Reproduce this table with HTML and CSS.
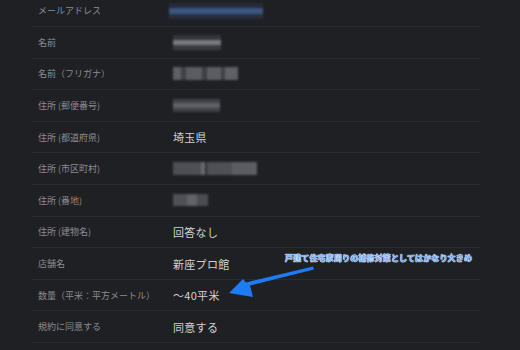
FILE: index.html
```html
<!DOCTYPE html>
<html lang="ja">
<head>
<meta charset="utf-8">
<link rel="stylesheet" href="styles.css">
</head>
<body>
<div class="page">
  <div class="table">
    <div class="row"><div class="label">メールアドレス</div><div class="value"><span class="mosaic m-email"></span></div></div>
    <div class="row"><div class="label">名前</div><div class="value"><span class="mosaic m-name"></span></div></div>
    <div class="row"><div class="label">名前（フリガナ）</div><div class="value"><span class="mosaic m-kana"></span></div></div>
    <div class="row"><div class="label">住所 (郵便番号)</div><div class="value"><span class="mosaic m-zip"></span></div></div>
    <div class="row"><div class="label">住所 (都道府県)</div><div class="value">埼玉県</div></div>
    <div class="row"><div class="label">住所 (市区町村)</div><div class="value"><span class="mosaic m-city"></span></div></div>
    <div class="row"><div class="label">住所 (番地)</div><div class="value"><span class="mosaic m-addr"></span></div></div>
    <div class="row"><div class="label">住所 (建物名)</div><div class="value">回答なし</div></div>
    <div class="row"><div class="label">店舗名</div><div class="value">新座プロ館</div></div>
    <div class="row"><div class="label">数量（平米：平方メートル）</div><div class="value">〜40平米</div></div>
    <div class="row"><div class="label">規約に同意する</div><div class="value">同意する</div></div>
  </div>
  <div class="note">戸建て住宅家周りの補修対策としてはかなり大きめ</div>
  <svg class="arrow" width="520" height="350" viewBox="0 0 520 350">
    <path d="M313 270.5 L314 273.5 L250 289.5 L253 301 L229 297 L243 283 L246 286.5 Z" fill="#1d7cf2"/>
  </svg>
</div>
</body>
</html>
```

FILE: styles.css
```css
html, body {
  margin: 0;
  padding: 0;
  background: #1f2024;
}
body {
  width: 520px;
  height: 350px;
  overflow: hidden;
  font-family: "Noto Sans CJK JP", "Noto Sans", sans-serif;
}
.page {
  position: relative;
  width: 520px;
  height: 350px;
}
.table {
  margin: -4.5px 0 0 32px;
  width: 449px;
  display: flex;
  flex-direction: column;
}
.row {
  height: 31.6px;
  box-sizing: border-box;
  border-bottom: 1px solid #2a2b30;
  display: grid;
  grid-template-columns: 141px 1fr;
  align-items: center;
}
.label {
  padding-left: 6px;
  font-size: 9px;
  color: #8b8c90;
  white-space: nowrap;
}
.value {
  font-size: 11px;
  letter-spacing: 0.3px;
  color: #d2d2d4;
  display: flex;
  align-items: center;
}
.mosaic {
  display: block;
  filter: blur(0.8px);
}
.m-email {
  width: 94px;
  height: 16px;
  margin-left: -4px;
  background:
    linear-gradient(180deg, #272b36 0 30%, #3a5682 30% 70%, #2a2f3b 70%);
}
.m-name {
  width: 48px;
  height: 15px;
  background:
    linear-gradient(180deg, #33353a 0 33%, #777a80 33% 66%, #3a3c42 66%);
}
.m-kana {
  width: 65px;
  height: 13px;
  background:
    linear-gradient(90deg, #5d5f64 0 12%, #3f4146 12% 20%, #5a5c61 20% 45%, #3e4045 45% 52%, #5b5d62 52% 74%, #404247 74% 80%, #5e6065 80%);
}
.m-zip {
  width: 47px;
  height: 13px;
  background:
    linear-gradient(180deg, #404247 0 30%, #5f6166 30% 70%, #3e4045 70%);
}
.m-city {
  width: 84px;
  height: 13px;
  background:
    linear-gradient(90deg, #4d4f54 0 33%, #67696e 33% 38%, #2c2e33 38% 41%, #4e5055 41% 70%, #5b5d62 70% 100%);
}
.m-addr {
  width: 35px;
  height: 12px;
  background:
    linear-gradient(90deg, #4f5156 0 40%, #606267 40% 70%, #4a4c51 70%);
}
.note {
  position: absolute;
  left: 285px;
  top: 256px;
  font-size: 8px;
  font-weight: bold;
  color: #3d8ef2;
  white-space: nowrap;
  letter-spacing: 0.15px;
  -webkit-text-stroke: 0.3px #cfe2ff;
  text-shadow: 0 0 1px #ffffff, 0 0 1px #ffffff;
}
.arrow {
  position: absolute;
  left: 0;
  top: 0;
}
```
